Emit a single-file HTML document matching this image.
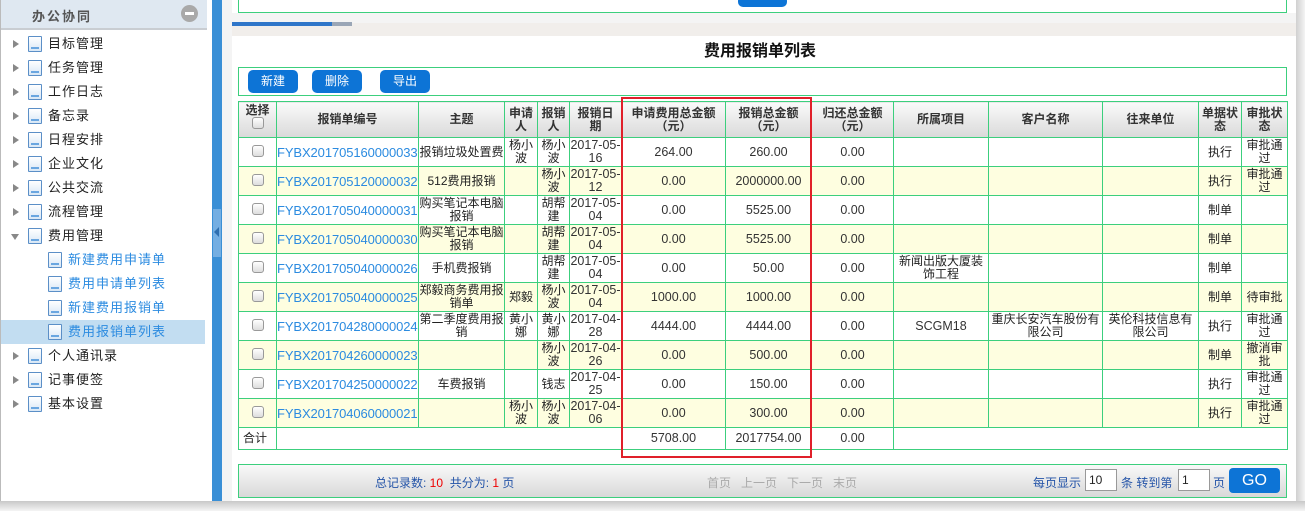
<!DOCTYPE html>
<html><head><meta charset="utf-8"><style>
*{margin:0;padding:0;box-sizing:border-box}
body{width:1305px;height:511px;background:#fff;position:relative;overflow:hidden;font-family:"Liberation Sans","Noto Sans CJK SC",sans-serif;font-size:12px;color:#222}
.a{position:absolute}
.side{left:0;top:0;width:212px;height:501px;background:#fff;border-left:1px solid #bbb}
.hd{left:1px;top:0;width:206px;height:30px;background:#dfe8f1;border-bottom:2px solid #c9cdd2}
.hd span{position:absolute;left:31px;top:6px;font-weight:bold;font-size:13px;color:#555;letter-spacing:2px}
.min{left:180px;top:5px;width:17px;height:17px;border-radius:50%;background:#a9a9a9}
.min:after{content:"";position:absolute;left:4px;top:7px;width:9px;height:3px;background:#fff}
.it{position:absolute;height:24px;font-size:13px;line-height:24px;letter-spacing:1px}
.tri{position:absolute;left:13px;top:8px;width:0;height:0;border-left:6px solid #888;border-top:4px solid transparent;border-bottom:4px solid transparent}
.tri.d{left:11px;top:10px;border-top:6px solid #888;border-left:4px solid transparent;border-right:4px solid transparent;border-bottom:0}
.doc{position:absolute;top:4px;width:14px;height:16px;border:1px solid #5b8fc7;background:linear-gradient(#fff,#d8e7f6);border-radius:1px}
.doc:after{content:"";position:absolute;left:2px;bottom:2px;width:8px;height:2px;background:#6aa6e0}
.bar{left:212px;top:0;width:10px;height:501px;background:#3a8fd6}
.tog{left:213px;top:209px;width:8px;height:48px;background:#74aee2}
.tog:after{content:"";position:absolute;left:1px;top:18px;border-right:5px solid #2f6fb0;border-top:5px solid transparent;border-bottom:5px solid transparent}
.gs{left:222px;top:0;width:10px;height:501px;background:#f4f4f4}
.frame{left:1296px;top:0;width:9px;height:511px;background:linear-gradient(90deg,#d0d0d0,#f4f4f4)}
.bot{left:0;top:501px;width:1305px;height:10px;background:linear-gradient(#c8c8c8,#f4f4f4)}
.gbox{border:1px solid #3ccf7d}
.btn{position:absolute;top:70px;height:23px;width:50px;background:#0d74d6;color:#fff;border-radius:5px;text-align:center;line-height:23px;font-size:12px}
table{position:absolute;left:238px;top:101px;border-collapse:collapse;table-layout:fixed;width:1049px}
td,th{border:1px solid #3ccf7d;text-align:center;vertical-align:middle;line-height:13px;font-size:12px;overflow:hidden;white-space:nowrap;padding:0}
th{background:linear-gradient(#fafafa,#d9d9d9);font-weight:bold;color:#333;height:36px}
tr.r td{height:29px}
tr.y td{background:#fefee0}
td.id{color:#2b8be0;text-align:left;padding-left:0;font-size:13px;letter-spacing:-0.1px}
td.n{font-size:12.5px;color:#333}
.cb{display:inline-block;width:12px;height:12px;border:1px solid #999;border-radius:3px;background:linear-gradient(#fff,#ddd)}
.m{color:#333;font-size:12.5px}
.pg{left:238px;top:464px;width:1049px;height:34px;background:linear-gradient(#f9f9f9,#d9d9d9);border:1px solid #3ccf7d}
.pg span{position:absolute;top:9px;font-size:12px}
.inp{position:absolute;top:4px;height:22px;background:#fff;border:1px solid #999;font-size:12px;line-height:20px;padding-left:3px}
</style></head><body>
<div class="a side"></div>
<div class="a hd"><span>办公协同</span><div class="a min"></div></div>
<div class="it" style="left:0;top:32px;width:206px"><i class="tri"></i><i class="doc" style="left:28px"></i><span style="position:absolute;left:48px">目标管理</span></div>
<div class="it" style="left:0;top:56px;width:206px"><i class="tri"></i><i class="doc" style="left:28px"></i><span style="position:absolute;left:48px">任务管理</span></div>
<div class="it" style="left:0;top:80px;width:206px"><i class="tri"></i><i class="doc" style="left:28px"></i><span style="position:absolute;left:48px">工作日志</span></div>
<div class="it" style="left:0;top:104px;width:206px"><i class="tri"></i><i class="doc" style="left:28px"></i><span style="position:absolute;left:48px">备忘录</span></div>
<div class="it" style="left:0;top:128px;width:206px"><i class="tri"></i><i class="doc" style="left:28px"></i><span style="position:absolute;left:48px">日程安排</span></div>
<div class="it" style="left:0;top:152px;width:206px"><i class="tri"></i><i class="doc" style="left:28px"></i><span style="position:absolute;left:48px">企业文化</span></div>
<div class="it" style="left:0;top:176px;width:206px"><i class="tri"></i><i class="doc" style="left:28px"></i><span style="position:absolute;left:48px">公共交流</span></div>
<div class="it" style="left:0;top:200px;width:206px"><i class="tri"></i><i class="doc" style="left:28px"></i><span style="position:absolute;left:48px">流程管理</span></div>
<div class="it" style="left:0;top:224px;width:206px"><i class="tri d"></i><i class="doc" style="left:28px"></i><span style="position:absolute;left:48px">费用管理</span></div>
<div class="it" style="left:0;top:248px;width:206px;color:#2b8be0"><i class="doc" style="left:48px"></i><span style="position:absolute;left:68px">新建费用申请单</span></div>
<div class="it" style="left:0;top:272px;width:206px;color:#2b8be0"><i class="doc" style="left:48px"></i><span style="position:absolute;left:68px">费用申请单列表</span></div>
<div class="it" style="left:0;top:296px;width:206px;color:#2b8be0"><i class="doc" style="left:48px"></i><span style="position:absolute;left:68px">新建费用报销单</span></div>
<div class="it" style="left:1px;top:320px;width:204px;color:#2b8be0;background:#c2ddf1"><i class="doc" style="left:47px"></i><span style="position:absolute;left:67px">费用报销单列表</span></div>
<div class="it" style="left:0;top:344px;width:206px"><i class="tri"></i><i class="doc" style="left:28px"></i><span style="position:absolute;left:48px">个人通讯录</span></div>
<div class="it" style="left:0;top:368px;width:206px"><i class="tri"></i><i class="doc" style="left:28px"></i><span style="position:absolute;left:48px">记事便签</span></div>
<div class="it" style="left:0;top:392px;width:206px"><i class="tri"></i><i class="doc" style="left:28px"></i><span style="position:absolute;left:48px">基本设置</span></div>
<div class="a bar"></div><div class="a tog"></div><div class="a gs"></div>
<div class="a" style="left:232px;top:13px;width:1064px;height:10px;background:#f4f4f4"></div>
<div class="a" style="left:232px;top:23px;width:1064px;height:13px;background:#f1eeeb"></div>
<div class="a" style="left:232px;top:22px;width:100px;height:4px;background:#2f76c9"></div>
<div class="a" style="left:332px;top:22px;width:20px;height:4px;background:#9aa6b6"></div>
<div class="a gbox" style="left:238px;top:-2px;width:1049px;height:15px"></div>
<div class="a" style="left:738px;top:-4px;width:49px;height:11px;background:#0d74d6;border-radius:5px"></div>
<div class="a" style="left:600px;top:37px;width:320px;text-align:center;font-size:16px;font-weight:bold;color:#111">费用报销单列表</div>
<div class="a gbox" style="left:238px;top:67px;width:1049px;height:29px"></div>
<div class="btn" style="left:248px">新建</div><div class="btn" style="left:312px">删除</div><div class="btn" style="left:380px">导出</div>
<table>
<colgroup><col style="width:38px"><col style="width:142px"><col style="width:86px"><col style="width:33px"><col style="width:32px"><col style="width:52px"><col style="width:104px"><col style="width:86px"><col style="width:82px"><col style="width:95px"><col style="width:114px"><col style="width:96px"><col style="width:43px"><col style="width:46px"></colgroup>
<tr><th style="vertical-align:top;padding-top:2px">选择<br><span class="cb"></span></th><th>报销单编号</th><th>主题</th><th>申请<br>人</th><th>报销<br>人</th><th>报销日<br>期</th><th>申请费用总金额<br>（元）</th><th>报销总金额<br>（元）</th><th>归还总金额<br>（元）</th><th>所属项目</th><th>客户名称</th><th>往来单位</th><th>单据状<br>态</th><th>审批状<br>态</th></tr>
<tr class="r"><td><span class="cb"></span></td><td class="id">FYBX201705160000033</td><td>报销垃圾处置费</td><td>杨小<br>波</td><td>杨小<br>波</td><td class="m">2017-05-<br>16</td><td class="n">264.00</td><td class="n">260.00</td><td class="n">0.00</td><td></td><td></td><td></td><td>执行</td><td>审批通<br>过</td></tr>
<tr class="r y"><td><span class="cb"></span></td><td class="id">FYBX201705120000032</td><td>512费用报销</td><td></td><td>杨小<br>波</td><td class="m">2017-05-<br>12</td><td class="n">0.00</td><td class="n">2000000.00</td><td class="n">0.00</td><td></td><td></td><td></td><td>执行</td><td>审批通<br>过</td></tr>
<tr class="r"><td><span class="cb"></span></td><td class="id">FYBX201705040000031</td><td>购买笔记本电脑<br>报销</td><td></td><td>胡帮<br>建</td><td class="m">2017-05-<br>04</td><td class="n">0.00</td><td class="n">5525.00</td><td class="n">0.00</td><td></td><td></td><td></td><td>制单</td><td></td></tr>
<tr class="r y"><td><span class="cb"></span></td><td class="id">FYBX201705040000030</td><td>购买笔记本电脑<br>报销</td><td></td><td>胡帮<br>建</td><td class="m">2017-05-<br>04</td><td class="n">0.00</td><td class="n">5525.00</td><td class="n">0.00</td><td></td><td></td><td></td><td>制单</td><td></td></tr>
<tr class="r"><td><span class="cb"></span></td><td class="id">FYBX201705040000026</td><td>手机费报销</td><td></td><td>胡帮<br>建</td><td class="m">2017-05-<br>04</td><td class="n">0.00</td><td class="n">50.00</td><td class="n">0.00</td><td>新闻出版大厦装<br>饰工程</td><td></td><td></td><td>制单</td><td></td></tr>
<tr class="r y"><td><span class="cb"></span></td><td class="id">FYBX201705040000025</td><td>郑毅商务费用报<br>销单</td><td>郑毅</td><td>杨小<br>波</td><td class="m">2017-05-<br>04</td><td class="n">1000.00</td><td class="n">1000.00</td><td class="n">0.00</td><td></td><td></td><td></td><td>制单</td><td>待审批</td></tr>
<tr class="r"><td><span class="cb"></span></td><td class="id">FYBX201704280000024</td><td>第二季度费用报<br>销</td><td>黄小<br>娜</td><td>黄小<br>娜</td><td class="m">2017-04-<br>28</td><td class="n">4444.00</td><td class="n">4444.00</td><td class="n">0.00</td><td class="n">SCGM18</td><td>重庆长安汽车股份有<br>限公司</td><td>英伦科技信息有<br>限公司</td><td>执行</td><td>审批通<br>过</td></tr>
<tr class="r y"><td><span class="cb"></span></td><td class="id">FYBX201704260000023</td><td></td><td></td><td>杨小<br>波</td><td class="m">2017-04-<br>26</td><td class="n">0.00</td><td class="n">500.00</td><td class="n">0.00</td><td></td><td></td><td></td><td>制单</td><td>撤消审<br>批</td></tr>
<tr class="r"><td><span class="cb"></span></td><td class="id">FYBX201704250000022</td><td>车费报销</td><td></td><td>钱志</td><td class="m">2017-04-<br>25</td><td class="n">0.00</td><td class="n">150.00</td><td class="n">0.00</td><td></td><td></td><td></td><td>执行</td><td>审批通<br>过</td></tr>
<tr class="r y"><td><span class="cb"></span></td><td class="id">FYBX201704060000021</td><td></td><td>杨小<br>波</td><td>杨小<br>波</td><td class="m">2017-04-<br>06</td><td class="n">0.00</td><td class="n">300.00</td><td class="n">0.00</td><td></td><td></td><td></td><td>执行</td><td>审批通<br>过</td></tr>
<tr><td style="height:22px;text-align:left;padding-left:4px">合计</td><td colspan="5"></td><td class="n">5708.00</td><td class="n">2017754.00</td><td class="n">0.00</td><td colspan="5"></td></tr>
</table>
<div class="a" style="left:621px;top:97px;width:191px;height:361px;border:2px solid #e0202a"></div>
<div class="a pg">
<span style="left:136px;color:#2454a8">总记录数: <b style="color:#e00;font-weight:normal">10</b> &nbsp;共分为: <b style="color:#e00;font-weight:normal">1</b> 页</span>
<span style="left:468px;color:#aaa">首页 &nbsp; 上一页 &nbsp; 下一页 &nbsp; 末页</span>
<span style="left:794px;color:#2454a8">每页显示</span>
<div class="inp" style="left:846px;width:32px">10</div>
<span style="left:882px;color:#2454a8">条 转到第</span>
<div class="inp" style="left:939px;width:32px">1</div>
<span style="left:974px;color:#2454a8">页</span>
<div class="a" style="left:990px;top:3px;width:51px;height:25px;background:#0d74d6;color:#fff;border-radius:4px;text-align:center;line-height:25px;font-size:16px">GO</div>
</div>
<div class="a frame"></div><div class="a bot"></div>
</body></html>
